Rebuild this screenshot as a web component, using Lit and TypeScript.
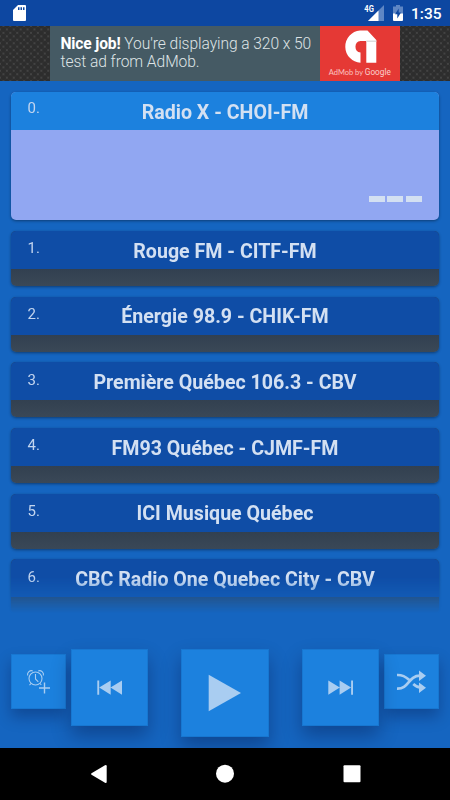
import { LitElement, html, css, svg } from "lit";
import { customElement, property } from "lit/decorators.js";

const stations = [
  "Rouge FM - CITF-FM",
  "Énergie 98.9 - CHIK-FM",
  "Première Québec 106.3 - CBV",
  "FM93 Québec - CJMF-FM",
  "ICI Musique Québec",
  "CBC Radio One Quebec City - CBV",
];

@customElement("status-bar")
class StatusBar extends LitElement {
  static styles = css`
    :host { display: flex; height: 26px; box-sizing: border-box; padding: 0 9px 0 13px; background: #0d47a1; color: #fff; }
    svg { display: block; flex: none; }
    .card { margin-top: 5px; }
    .signal { margin: 4px 9px 0 auto; }
    .battery { margin-top: 5px; }
    .gen { font: 700 8.5px Roboto, sans-serif; }
    .time { font: 500 15.500px/27px Roboto, sans-serif; margin-left: 8px; width: 30px; white-space: nowrap; padding-top: 1px; }
  `;
  render() {
    return html`
      <svg class="card" width="14" height="17" viewBox="0 0 14 17">
        <path fill="#fff" d="M5 0h7q1 0 1 1v14q0 1-1 1H1q-1 0-1-1V5z" />
        <path fill="#0d47a1" d="M5 2.200h1.500v2.800H5zM7.500 2.200H9v2.800H7.500zM10 2.200h1.500v2.800H10z" />
      </svg>
      <svg class="signal" width="20" height="18" viewBox="0 0 20 18">
        <path fill="#5e86c4" d="M20 1v16H4z" />
        <path fill="#fff" d="M14.500 6.500V17H4z" />
        <path fill="#0d47a1" d="M0 0h10.500v9H0z" />
        <text class="gen" x="0.300" y="8" fill="#fff" textLength="9.500" lengthAdjust="spacingAndGlyphs">4G</text>
      </svg>
      <svg class="battery" width="10" height="16" viewBox="0 0 10 16">
        <path fill="#5e86c4" d="M3 0h4v1.500h3V9H0V1.500h3z" />
        <path fill="#fff" d="M0 8.500h10V15q0 1-1 1H1q-1 0-1-1z" />
        <path fill="#0d47a1" d="M5.700 3.500v4h2.300L4.300 13.500v-4.200H2z" />
      </svg>
      <div class="time">1:35</div>
    `;
  }
}

@customElement("ad-banner")
class AdBanner extends LitElement {
  static styles = css`
    :host {
      display: flex; justify-content: center; height: 55px; background-color: #434343;
      background-image: radial-gradient(ellipse, #2d2d2d 45%, transparent 60%), radial-gradient(ellipse, #2d2d2d 45%, transparent 60%);
      background-size: 6.900px 6.900px; background-position: 0 0, 3.450px 3.450px;
    }
    .copy {
      box-sizing: border-box; width: 270px; padding: 8.600px 0 0 10.500px; background: #455a64; color: #dfe4e6;
      font: 300 15.600px/18px Roboto, sans-serif; letter-spacing: -0.070px; white-space: nowrap;
    }
    b { color: #fff; font-weight: 700; letter-spacing: -0.150px; }
    .logo { width: 80px; background: #e53935; }
    svg { display: block; }
    .brand { font: 400 8px Lato, sans-serif; }
  `;
  render() {
    return html`
      <div class="copy"><b>Nice job!</b> You're displaying a 320 x 50<br />test ad from AdMob.</div>
      <div class="logo">
        <svg width="80" height="55" viewBox="0 0 80 55">
          <path fill="#fff" d="M40 4.500H47.500L56.300 14V36.800H46.300V15H40.500a5.800 5.800 0 0 0 0 11.500V36.800A16.200 16.200 0 0 1 40 4.500z" />
          <path fill="#ddd" d="M46.300 14.500h10v1.500h-10z" />
          <text class="brand" x="8.800" y="48.800" fill="#fbc4c0" textLength="62" lengthAdjust="spacingAndGlyphs">AdMob by <tspan font-family="Roboto" font-size="8.800" fill="#fbd0cd">Google</tspan></text>
        </svg>
      </div>
    `;
  }
}

@customElement("station-card")
class StationCard extends LitElement {
  @property({ type: Number }) index = 0;
  @property() name = "";
  @property({ type: Boolean, reflect: true }) active = false;

  static styles = css`
    :host { display: block; flex: none; height: 55px; border-radius: 5px; box-shadow: 0 1px 3px rgba(0, 0, 0, 0.4); overflow: hidden; background: linear-gradient(#324050 38px, #3a4857); }
    :host([active]) { height: 128.300px; background: #91a7f2; }
    .head { display: grid; grid-template: 38px / 100%; background: #0f4da6; color: #d3e0f2; font-family: Roboto, sans-serif; }
    :host([active]) .head { background: #1c81de; }
    .num, .name { grid-area: 1 / 1; }
    .num { font-size: 15px; line-height: 18px; padding: 8.300px 0 0 16.500px; color: #c3d5ef; }
    :host([active]) .num { padding-top: 7px; }
    .name { font-size: 19.600px; font-weight: 700; line-height: 38px; padding-top: 1.700px; text-align: center; white-space: nowrap; }
    .meter { display: flex; justify-content: flex-end; gap: 2.500px; padding: 66px 17.500px 0 0; }
    .bar { width: 16px; height: 5.500px; background: #d3e0f2; }
  `;
  render() {
    return html`
      <div class="head">
        <span class="num">${this.index}.</span>
        <span class="name">${this.name}</span>
      </div>
      ${this.active ? html`<div class="meter"><i class="bar"></i><i class="bar"></i><i class="bar"></i></div>` : ""}
    `;
  }
}

const icons = {
  alarm: svg`<g fill="none" stroke="#a9cdf1" stroke-width="1.100">
      <circle cx="24.500" cy="24.500" r="6.500" />
      <path d="M24.500 20v5l2.800 2.800M20 29.500l-1.500 1.700M29 29.500l1.300 1.500M16.600 21.500a4 4 0 0 1 5.200-4.600M32.400 21.500a4 4 0 0 0-5.200-4.600" />
      <path stroke-width="1.400" d="M28 34h11M33.500 28.500v11" />
    </g>`,
  prev: svg`<path fill="#a9cdf1" d="M26.300 31.500h1.900v14.300h-1.900zM28.200 38.600l11.500-7.100v14.300zM39.500 38.600l11.500-7.100v14.300z" />`,
  play: svg`<path fill="#a9cdf1" d="M27.700 25.700v36.500L60 43.900z" />`,
  next: svg`<path fill="#a9cdf1" d="M51 31.500h-1.900v14.300H51zM49.100 38.600l-11.500-7.100v14.300zM37.800 38.600l-11.500-7.100v14.300z" />`,
  shuffle: svg`<g fill="none" stroke="#a9cdf1" stroke-width="2.700">
      <path d="M13 21c5-.2 8.500 1.500 12 4.800M13 34.700c12 .5 11-13 23-13M29.300 30c2 2 3.500 3.300 7 3.300" />
    </g>
    <path fill="#a9cdf1" d="M35 16.400l7 5.300-7 5.300zM35 28.400l7 5.300-7 5.300z" />`,
};

@customElement("player-controls")
class PlayerControls extends LitElement {
  static styles = css`
    :host { display: flex; justify-content: space-between; align-items: flex-start; height: 99px; padding: 0 11px; }
    .group { display: flex; gap: 5px; align-items: flex-start; }
    .btn { display: block; border: 0; padding: 0; background: #1c81de; outline: 1px solid rgba(14, 95, 178, 0.3); outline-offset: -1px; box-shadow: 0 8px 14px rgba(0, 0, 40, 0.27); }
    .small { width: 55px; height: 55px; margin-top: 5.300px; }
    .medium { width: 77px; height: 77px; position: relative; }
    .large { width: 88px; height: 88px; position: relative; }
    .medium, .large { box-shadow: 0 10px 18px rgba(0, 0, 40, 0.3); }
    svg { display: block; }
  `;
  render() {
    return html`
      <div class="group">
        <button class="btn small" aria-label="Alarm"><svg width="55" height="55">${icons.alarm}</svg></button>
        <button class="btn medium" aria-label="Previous"><svg width="77" height="77">${icons.prev}</svg></button>
      </div>
      <button class="btn large" aria-label="Play"><svg width="88" height="88">${icons.play}</svg></button>
      <div class="group">
        <button class="btn medium" aria-label="Next"><svg width="77" height="77">${icons.next}</svg></button>
        <button class="btn small" aria-label="Shuffle"><svg width="55" height="55">${icons.shuffle}</svg></button>
      </div>
    `;
  }
}

@customElement("app-root")
class AppRoot extends LitElement {
  static styles = css`
    :host { display: flex; flex-direction: column; height: 800px; background: #1565c0; overflow: hidden; }
    .list {
      display: flex; flex-direction: column; gap: 10.700px; flex: none; box-sizing: border-box; height: 532px; padding: 11px 11px 0; overflow: hidden;
      -webkit-mask-image: linear-gradient(#000 496px, transparent 532px);
      mask-image: linear-gradient(#000 496px, transparent 532px);
    }
    player-controls { margin-top: 36px; flex: none; }
    .nav { position: relative; display: flex; justify-content: space-between; align-items: center; height: 52px; box-sizing: border-box; padding: 0 89.500px 0 90px; background: #000; }
    .nav svg { display: block; }
  `;
  render() {
    return html`
      <status-bar></status-bar>
      <ad-banner></ad-banner>
      <div class="list">
        <station-card active .index=${0} .name=${"Radio X - CHOI-FM"}></station-card>
        ${stations.map((s, i) => html`<station-card .index=${i + 1} .name=${s}></station-card>`)}
      </div>
      <player-controls></player-controls>
      <div class="nav">
        <svg width="18" height="20"><path fill="#fff" d="M1.500 9.300L15 1.200q1.700-.8 1.700 1v15.600q0 1.800-1.700 1L1.500 10.700q-1-.7 0-1.400z" /></svg>
        <svg width="18" height="20"><circle cx="9" cy="9.700" r="9" fill="#fff" /></svg>
        <svg width="18" height="20"><rect x="0.500" y="1.300" width="17" height="17" rx="1" fill="#fff" /></svg>
      </div>
    `;
  }
}
